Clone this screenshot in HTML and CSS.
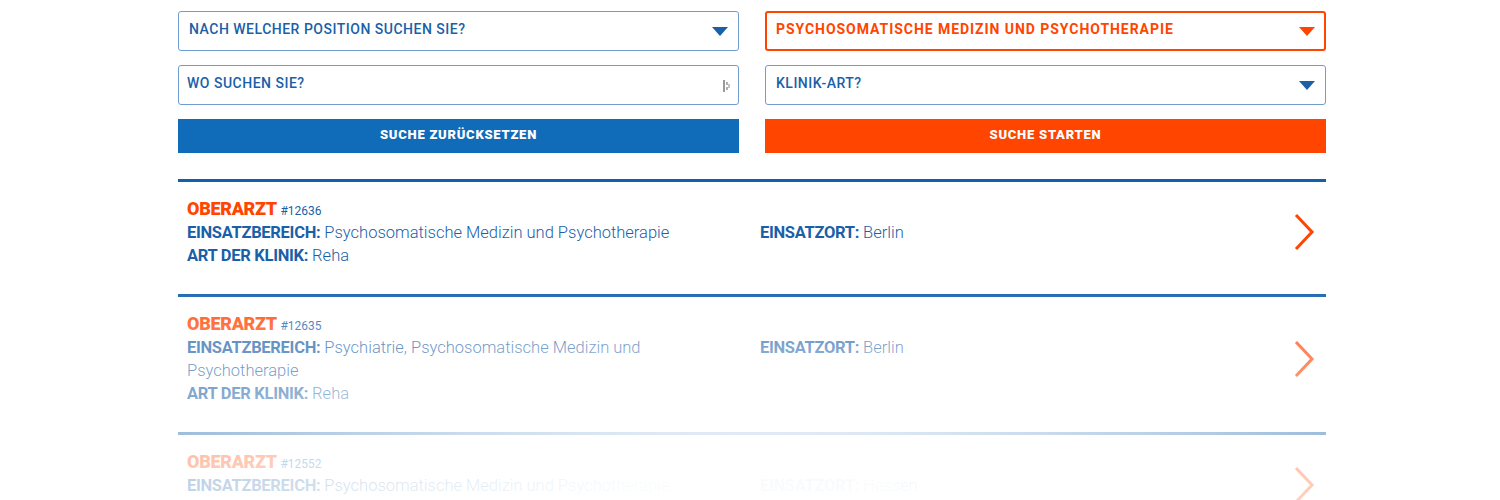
FILE: index.html
```html
<!DOCTYPE html>
<html lang="de">
<head>
<meta charset="utf-8">
<title>Stellensuche</title>
<link rel="stylesheet" href="styles.css">
</head>
<body>
<div class="page">
  <form class="search">
    <div class="field">
      <span class="field-text">Nach welcher Position suchen Sie?</span>
      <span class="caret"></span>
    </div>
    <div class="field field-active">
      <span class="field-text">Psychosomatische Medizin und Psychotherapie</span>
      <span class="caret"></span>
    </div>
    <div class="field field-input">
      <span class="field-text">Wo suchen Sie?</span>
      <svg class="autofill" width="8" height="12" viewBox="0 0 8 12"><rect x="0" y="0" width="2" height="12" fill="#9a9a9a"/><rect x="3" y="2" width="2" height="3" fill="#b0b0b0"/><rect x="3" y="7" width="2" height="3" fill="#b0b0b0"/><rect x="5" y="4" width="2" height="4" fill="#c4c4c4"/></svg>
    </div>
    <div class="field">
      <span class="field-text">Klinik-Art?</span>
      <span class="caret"></span>
    </div>
    <button type="button" class="btn btn-reset">Suche zurücksetzen</button>
    <button type="button" class="btn btn-start">Suche starten</button>
  </form>

  <div class="results">
    <div class="item">
      <div class="main">
        <div class="title">Oberarzt <span class="num">#12636</span></div>
        <div class="row"><b>Einsatzbereich:</b> Psychosomatische Medizin und Psychotherapie</div>
        <div class="row"><b>Art der Klinik:</b> Reha</div>
      </div>
      <div class="side"><div class="row"><b>Einsatzort:</b> Berlin</div></div>
      <svg class="chev" width="24" height="40" viewBox="0 0 24 40"><path d="M4 3 L20 20 L4 37" fill="none" stroke="#ff4500" stroke-width="3"/></svg>
    </div>
    <div class="item">
      <div class="main">
        <div class="title">Oberarzt <span class="num">#12635</span></div>
        <div class="row"><b>Einsatzbereich:</b> Psychiatrie, Psychosomatische Medizin und Psychotherapie</div>
        <div class="row"><b>Art der Klinik:</b> Reha</div>
      </div>
      <div class="side"><div class="row"><b>Einsatzort:</b> Berlin</div></div>
      <svg class="chev" width="24" height="40" viewBox="0 0 24 40"><path d="M4 3 L20 20 L4 37" fill="none" stroke="#ff4500" stroke-width="3"/></svg>
    </div>
    <div class="item">
      <div class="main">
        <div class="title">Oberarzt <span class="num">#12552</span></div>
        <div class="row"><b>Einsatzbereich:</b> Psychosomatische Medizin und Psychotherapie</div>
        <div class="row"><b>Art der Klinik:</b> Reha</div>
      </div>
      <div class="side"><div class="row"><b>Einsatzort:</b> Hessen</div></div>
      <svg class="chev" width="24" height="40" viewBox="0 0 24 40"><path d="M4 3 L20 20 L4 37" fill="none" stroke="#ff4500" stroke-width="3"/></svg>
    </div>
    <div class="fade"></div>
  </div>
</div>
</body>
</html>
```
FILE: styles.css
```css
html, body {
  margin: 0;
  padding: 0;
  background: #fff;
}
body {
  font-family: Roboto, "Liberation Sans", sans-serif;
  color: #1a5fa8;
}
.page {
  width: 1148px;
  margin-left: 178px;
  padding-top: 11px;
  height: 489px;
  overflow: hidden;
}
.search {
  display: grid;
  grid-template-columns: 1fr 1fr;
  grid-template-rows: 40px 40px 34px;
  column-gap: 26px;
  row-gap: 14px;
}
.field {
  box-sizing: border-box;
  border: 1px solid #6f9dd0;
  border-radius: 3px;
  display: flex;
  align-items: center;
  padding: 0 10px 0 10px;
  position: relative;
}
.field-text {
  flex: 1;
  text-transform: uppercase;
  font-size: 14px;
  font-weight: 500;
  letter-spacing: 0.5px;
  color: #1a5fa8;
  padding-bottom: 4px;
}
.field-input { padding-left: 8px; }
.field-active {
  border: 2px solid #ff4500;
  padding-left: 9px;
}
.field-active .field-text {
  color: #ff4500;
  font-weight: 700;
  letter-spacing: 0.95px;
}
.caret {
  width: 0;
  height: 0;
  border-left: 8px solid transparent;
  border-right: 8px solid transparent;
  border-top: 9px solid #1a5fa8;
  margin-right: 0;
  margin-top: 1px;
}
.field-active .caret { border-top-color: #ff4500; margin-right: -1px; }
.autofill { margin-right: -3px; margin-top: 1px; }
.btn {
  border: none;
  margin: 0;
  font-family: Roboto, "Liberation Sans", sans-serif;
  font-weight: 900;
  font-size: 13px;
  letter-spacing: 0.75px;
  text-transform: uppercase;
  color: #fff;
  padding: 0 0 3px;
}
.btn-reset { background: #106cb8; }
.btn-start { background: #ff4500; }

.results {
  margin-top: 26px;
  position: relative;
}
.item {
  border-top: 3px solid #1260ac;
  display: flex;
  padding: 15px 10px 27px 9px;
}
.main {
  width: 573px;
  flex: none;
  padding-right: 20px;
  box-sizing: border-box;
}
.side {
  padding-top: 24px;
  flex: 1;
}
.title {
  font-size: 18px;
  line-height: 24px;
  height: 24px;
  font-weight: 900;
  color: #ff4500;
  text-transform: uppercase;
  letter-spacing: -0.3px;
}
.num {
  font-size: 12px;
  line-height: 1;
  font-weight: 400;
  color: #1a5fa8;
  text-transform: none;
  letter-spacing: 0;
}
.row {
  font-size: 16.5px;
  line-height: 23px;
  font-weight: 300;
  color: #1a5fa8;
}
.row b {
  font-weight: 700;
  line-height: 1;
  text-transform: uppercase;
  color: #1a5fa8;
  letter-spacing: -0.3px;
}
.chev {
  align-self: center;
  flex: none;
}
.fade {
  position: absolute;
  left: 0;
  right: 0;
  top: 100px;
  height: 221px;
  pointer-events: none;
  background:
    radial-gradient(ellipse 60% 80% at 50% 100%, rgba(255,255,255,0.92) 20%, rgba(255,255,255,0) 100%),
    linear-gradient(to bottom, rgba(255,255,255,0) 0%, rgba(255,255,255,0.3) 25%, rgba(255,255,255,0.55) 70%, rgba(255,255,255,0.68) 100%);
}
```
